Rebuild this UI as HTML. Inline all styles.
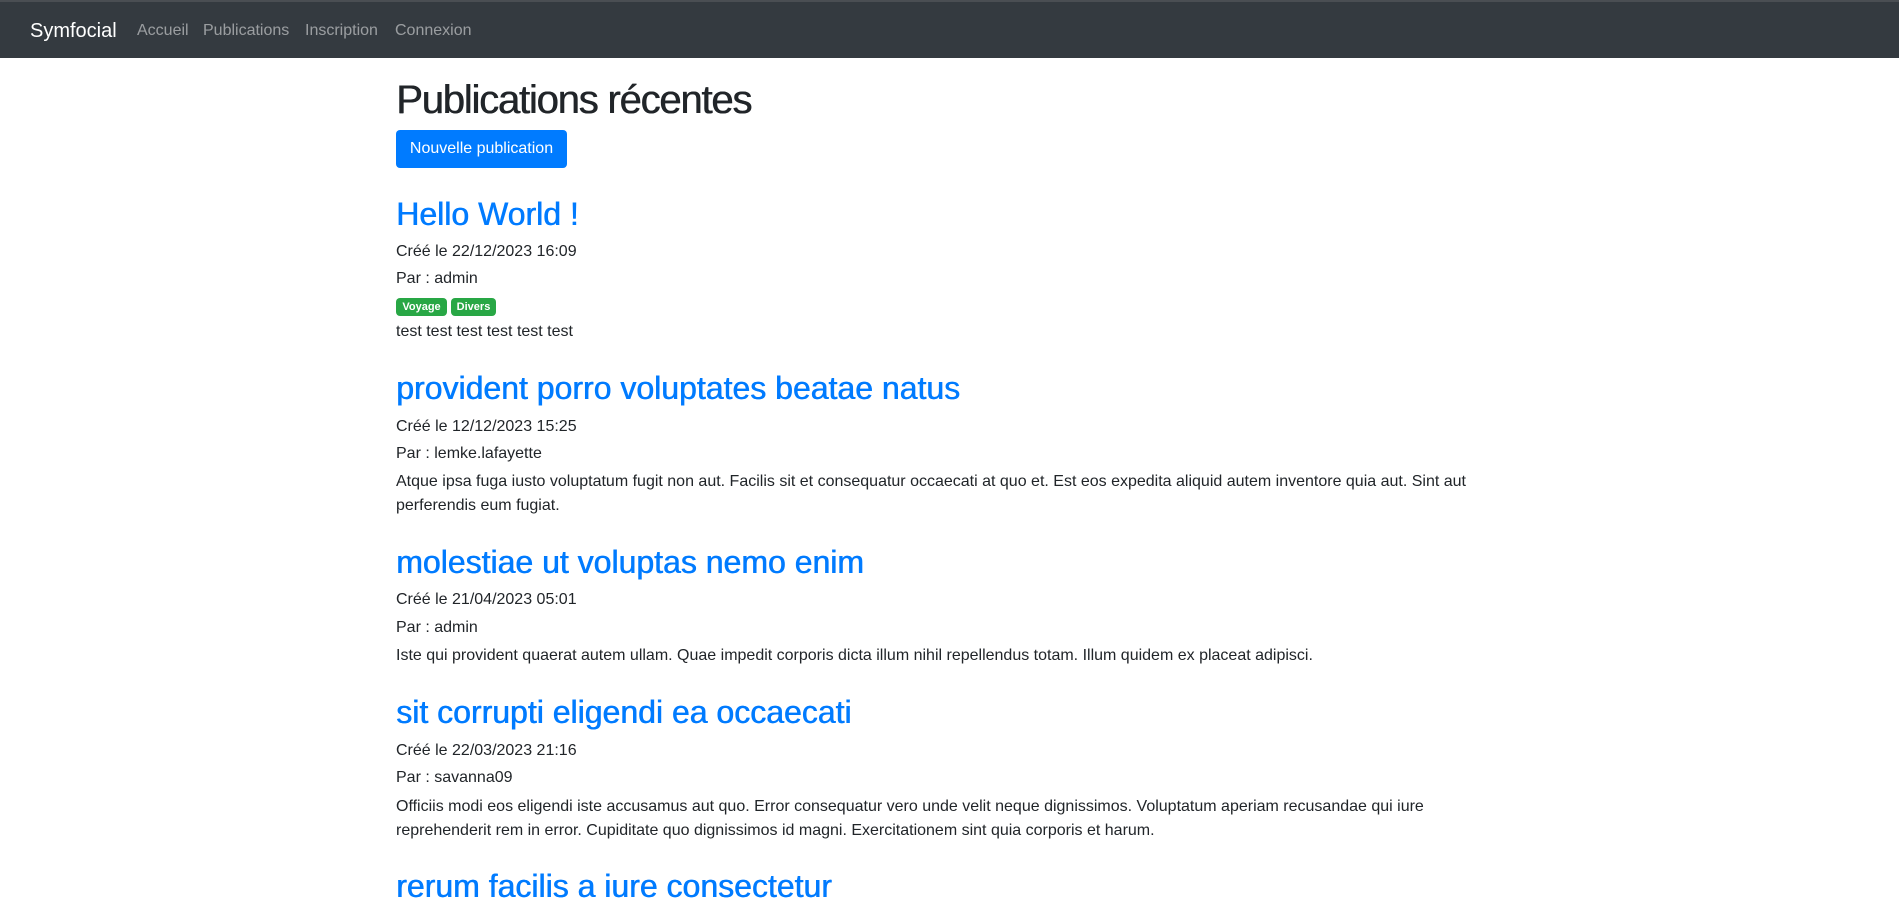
<!DOCTYPE html>
<html><head><meta charset="utf-8">
<style>
html,body{margin:0;padding:0;background:#fff;}
body{width:1899px;height:907px;overflow:hidden;position:relative;font-family:"Liberation Sans",sans-serif;color:#212529;font-size:16px;}
.nav{position:absolute;left:0;top:0;width:1899px;height:58px;background:#343a40;border-top:2px solid #4a4e53;box-sizing:border-box;}
.nav span{position:absolute;top:0;line-height:58px;white-space:nowrap;}
.brand{left:30px;font-size:20px;color:#fff;}
.lnk{font-size:16px;color:rgba(255,255,255,.5);}
.a{position:absolute;left:396px;white-space:nowrap;}
h1{margin:0;font-size:40px;font-weight:normal;line-height:48px;letter-spacing:-1.2px;color:#212529;text-shadow:0.6px 0 0 #212529;}
.btn{left:396px;top:130px;width:171px;height:38px;background:#007bff;color:#fff;border-radius:4px;text-align:center;line-height:38px;font-size:16px;}
.t{font-size:32px;line-height:38px;color:#007bff;text-shadow:0.6px 0 0 #007bff;}
.l{font-size:16px;line-height:24px;}
.badge{display:inline-block;background:#28a745;color:#fff;font-size:11px;font-weight:bold;height:18px;line-height:18px;border-radius:4px;text-align:center;vertical-align:top;}
</style></head><body>
<div class="nav">
<span class="brand">Symfocial</span>
<span class="lnk" style="left:137px">Accueil</span>
<span class="lnk" style="left:203px">Publications</span>
<span class="lnk" style="left:305px">Inscription</span>
<span class="lnk" style="left:395px">Connexion</span>
</div>
<div class="a" style="top:76px"><h1>Publications récentes</h1></div>
<div class="a btn">Nouvelle publication</div>

<div class="a t" style="top:195px">Hello World !</div>
<div class="a l" style="top:240px">Créé le 22/12/2023 16:09</div>
<div class="a l" style="top:267px">Par : admin</div>
<div class="a" style="top:298px"><span class="badge" style="width:51px">Voyage</span><span class="badge" style="width:45px;margin-left:4px">Divers</span></div>
<div class="a l" style="top:320px">test test test test test test</div>

<div class="a t" style="top:369px">provident porro voluptates beatae natus</div>
<div class="a l" style="top:415px">Créé le 12/12/2023 15:25</div>
<div class="a l" style="top:442px">Par : lemke.lafayette</div>
<div class="a l" style="top:470px">Atque ipsa fuga iusto voluptatum fugit non aut. Facilis sit et consequatur occaecati at quo et. Est eos expedita aliquid autem inventore quia aut. Sint aut<br>perferendis eum fugiat.</div>

<div class="a t" style="top:543px">molestiae ut voluptas nemo enim</div>
<div class="a l" style="top:588px">Créé le 21/04/2023 05:01</div>
<div class="a l" style="top:616px">Par : admin</div>
<div class="a l" style="top:644px">Iste qui provident quaerat autem ullam. Quae impedit corporis dicta illum nihil repellendus totam. Illum quidem ex placeat adipisci.</div>

<div class="a t" style="top:693px">sit corrupti eligendi ea occaecati</div>
<div class="a l" style="top:739px">Créé le 22/03/2023 21:16</div>
<div class="a l" style="top:766px">Par : savanna09</div>
<div class="a l" style="top:795px">Officiis modi eos eligendi iste accusamus aut quo. Error consequatur vero unde velit neque dignissimos. Voluptatum aperiam recusandae qui iure<br>reprehenderit rem in error. Cupiditate quo dignissimos id magni. Exercitationem sint quia corporis et harum.</div>

<div class="a t" style="top:867px">rerum facilis a iure consectetur</div>
</body></html>
